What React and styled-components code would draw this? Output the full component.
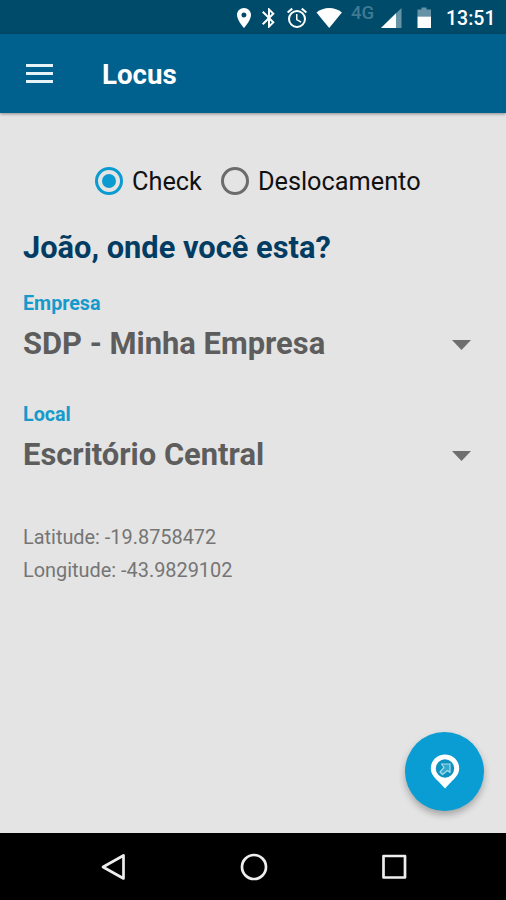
import React, { useState } from 'react'
import styled, { createGlobalStyle } from 'styled-components'

const GlobalStyle = createGlobalStyle`
    * {
        box-sizing: border-box;
    }

    body {
        margin: 0;
        background: #000;
        font-family: 'Roboto', sans-serif;
    }
`;

const Screen = styled.div`
    display: flex;
    flex-direction: column;
    width: 506px;
    height: 900px;
    overflow: hidden;
    background-color: #e4e4e4;
`;

const StatusBar = styled.div`
    display: flex;
    align-items: center;
    flex: 0 0 34px;
    padding-left: 232px;
    background-color: #004b69;
`;

const StatusIcon = styled.svg`
    flex: none;
    width: ${props => props.$width || 24}px;
    height: 24px;
    margin: 1px ${props => props.$gap || 0}px 0 0;
    fill: #fff;
`;

const Network = styled.span`
    width: 25px;
    margin: 0 4px 8px 0;
    font-size: 18.5px;
    line-height: 20px;
    font-weight: 500;
    color: #3f7a94;
`;

const Clock = styled.span`
    font-size: 19.5px;
    line-height: 24px;
    font-weight: 500;
    color: #fff;
    margin-top: 3px;
`;

const AppBar = styled.header`
    display: flex;
    align-items: center;
    flex: 0 0 79px;
    padding: 0 26px;
    background-color: #00618f;
    box-shadow: 0 1px 3px rgba(0, 0, 0, 0.4);
`;

const MenuButton = styled.button`
    display: flex;
    flex-direction: column;
    gap: 5px;
    width: 27px;
    margin-right: 49px;
    padding: 0;
    border: 0;
    background: none;
`;

const MenuLine = styled.span`
    height: 3px;
    background-color: #e6f4fa;
`;

const Title = styled.h1`
    margin: 3px 0 0;
    font-size: 27.7px;
    line-height: 32px;
    font-weight: 700;
    color: #fff;
`;

const Content = styled.main`
    display: flex;
    flex-direction: column;
    flex: 1;
    padding: 48px 22px 22px 23px;
`;

const RadioGroup = styled.div`
    display: flex;
    height: 40px;
    margin-left: 72px;
`;

const RadioOption = styled.label`
    display: flex;
    align-items: center;
    margin-right: 19px;
    font-size: 25.3px;
    color: #111;
    cursor: pointer;
`;

const RadioInput = styled.input`
    appearance: none;
    display: grid;
    place-items: center;
    width: 28px;
    height: 28px;
    margin: 0 9px 0 0;
    border: 3px solid ${props => props.checked ? '#0c9bd0' : '#6b6b6b'};
    border-radius: 50%;

    &::before {
        content: '';
        width: 14px;
        height: 14px;
        border-radius: 50%;
        background-color: ${props => props.checked ? '#0c9bd0' : 'transparent'};
    }
`;

const Question = styled.h2`
    margin: 28px 0 0;
    font-size: 30.8px;
    line-height: 38px;
    font-weight: 700;
    color: #023c63;
`;

const Field = styled.div`
    height: 84px;
    margin-bottom: 27px;
`;

const Fields = styled.div`
    margin-top: 25px;
`;

const FieldLabel = styled.div`
    font-size: 19.7px;
    line-height: 24px;
    font-weight: 700;
    color: #159acb;
`;

const Picker = styled.div`
    display: flex;
    align-items: center;
    justify-content: space-between;
    height: 54px;
    padding-right: 13px;
    font-size: 30.9px;
    font-weight: 700;
    color: #5d5d5d;
`;

const Arrow = styled.svg`
    width: 19px;
    height: 10px;
    margin-top: 4px;
    fill: #6f6f6f;
`;

const Coordinates = styled.div`
    margin-top: 8px;
    font-size: 19.9px;
    line-height: 32.5px;
    color: #757575;
`;

const Fab = styled.button`
    display: flex;
    align-items: center;
    justify-content: center;
    width: 79px;
    height: 79px;
    margin: auto 0 0 auto;
    padding: 0;
    border: 0;
    border-radius: 50%;
    background-color: #099dd3;
    box-shadow: 0 4px 7px rgba(0, 0, 0, 0.28);
`;

const NavigationBar = styled.nav`
    display: flex;
    align-items: center;
    justify-content: space-between;
    flex: 0 0 67px;
    padding: 0 97px 0 99px;
    background-color: #000;
`;

const NavIcon = styled.svg`
    width: 30px;
    height: 30px;
    fill: none;
    stroke: #eee;
    stroke-width: 2.7;
    stroke-linejoin: round;
`;

const fields = [
    { label: 'Empresa', value: 'SDP - Minha Empresa' },
    { label: 'Local', value: 'Escritório Central' },
];

function StatusIcons() {
    return (
        <>
            <StatusIcon viewBox="0 0 24 24" $gap={1}>
                <path d="M12 2C8.13 2 5 5.13 5 9c0 5.25 7 13 7 13s7-7.75 7-13c0-3.87-3.13-7-7-7zm0 9.5a2.5 2.5 0 1 1 0-5 2.5 2.5 0 0 1 0 5z" />
            </StatusIcon>
            <StatusIcon viewBox="0 0 24 24" $gap={4}>
                <path d="M17.71 7.71L12 2h-1v7.59L6.41 5 5 6.41 10.59 12 5 17.59 6.41 19 11 14.41V22h1l5.71-5.71-4.3-4.29 4.3-4.29zM13 5.83l1.88 1.88L13 9.59V5.83zm1.88 10.46L13 18.17v-3.76l1.88 1.88z" />
            </StatusIcon>
            <StatusIcon viewBox="0 0 24 24" $gap={7}>
                <path d="M22 5.72l-4.6-3.86-1.29 1.53 4.6 3.86L22 5.72zM7.88 3.39L6.6 1.86 2 5.71l1.29 1.53 4.59-3.85zM12.5 8H11v6l4.75 2.85.75-1.23-4-2.37V8zM12 4a9 9 0 1 0 0 18 9 9 0 0 0 0-18zm0 16a7 7 0 1 1 0-14 7 7 0 0 1 0 14z" />
            </StatusIcon>
            <StatusIcon viewBox="0 0 27 24" $width={27} $gap={8}>
                <path d="M.5 6.5C4 3.7 8.5 2 13.2 2s9.2 1.7 12.7 4.5L13.2 22z" />
            </StatusIcon>
            <Network>4G</Network>
            <StatusIcon viewBox="0 0 23 24" $width={23} $gap={14}>
                <path d="M1 22L21.5 2v20z" opacity="0.4" />
                <path d="M1 22L16 7.3V22z" />
            </StatusIcon>
            <StatusIcon viewBox="0 0 15 24" $width={15} $gap={14}>
                <path d="M4.5 1.5h5V3.5H14V10.5H.5V3.5h4z" opacity="0.4" />
                <path d="M.5 10.5H14V22H.5z" />
            </StatusIcon>
        </>
    )
}

export default function App() {
    const [mode, setMode] = useState('Check');

    return (
        <Screen>
            <GlobalStyle />
            <StatusBar>
                <StatusIcons />
                <Clock>13:51</Clock>
            </StatusBar>
            <AppBar>
                <MenuButton aria-label="Menu">
                    <MenuLine />
                    <MenuLine />
                    <MenuLine />
                </MenuButton>
                <Title>Locus</Title>
            </AppBar>
            <Content>
                <RadioGroup>
                    {['Check', 'Deslocamento'].map(option => (
                        <RadioOption key={option}>
                            <RadioInput
                                type="radio"
                                name="mode"
                                checked={mode === option}
                                onChange={() => setMode(option)}
                            />
                            {option}
                        </RadioOption>
                    ))}
                </RadioGroup>
                <Question>João, onde você esta?</Question>
                <Fields>
                    {fields.map(field => (
                        <Field key={field.label}>
                            <FieldLabel>{field.label}</FieldLabel>
                            <Picker>
                                {field.value}
                                <Arrow viewBox="0 0 19 10">
                                    <path d="M0 0h19L9.5 10z" />
                                </Arrow>
                            </Picker>
                        </Field>
                    ))}
                </Fields>
                <Coordinates>
                    <div>Latitude: -19.8758472</div>
                    <div>Longitude: -43.9829102</div>
                </Coordinates>
                <Fab aria-label="Check in">
                    <svg width="30" height="36" viewBox="0 0 30 36">
                        <path fill="#fff" d="M15 .5C7 .5.8 6.5.8 14.5c0 5 3.2 9 7.2 12.5L15 34.5l7-7.5c4-3.5 7.2-7.5 7.2-12.5C29.2 6.5 23 .5 15 .5z" />
                        <circle cx="15" cy="14.5" r="9.2" fill="#0e92c0" />
                        <path fill="#38a8cc" stroke="#a5dcec" strokeWidth="1.2" strokeLinejoin="round" d="M11.5 10h8.5v8.5l-2.5-2-5 4-2.5-2.5 4-4.5z" />
                    </svg>
                </Fab>
            </Content>
            <NavigationBar>
                <NavIcon viewBox="0 0 30 30">
                    <path d="M4 15L24.5 3.5v23z" />
                </NavIcon>
                <NavIcon viewBox="0 0 30 30">
                    <circle cx="15" cy="15" r="12" />
                </NavIcon>
                <NavIcon viewBox="0 0 30 30">
                    <path d="M4.5 4h21.5v21.5H4.5z" />
                </NavIcon>
            </NavigationBar>
        </Screen>
    )
}
